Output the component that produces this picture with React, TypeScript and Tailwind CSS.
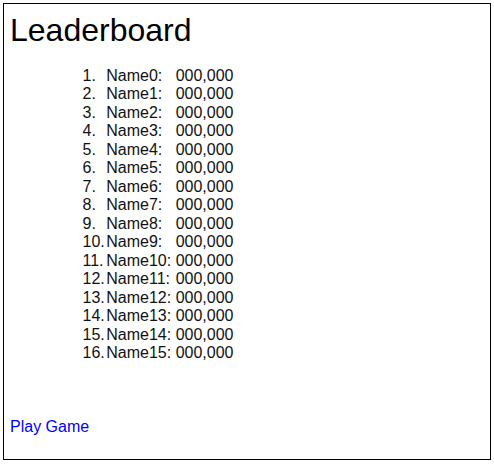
import React from "react";

const rows = Array.from({ length: 16 }, (_, i) => ({
  rank: `${i + 1}.`,
  name: `Name${i}:`,
  score: "000,000",
}));

export default function App() {
  return (
    <div className="p-[3px] bg-white" style={{ fontFamily: '"Liberation Sans", Arial, sans-serif' }}>
      <div className="border border-black w-[488px] h-[457px] flex flex-col bg-white">
        <h1 className="text-[32px] leading-[normal] text-black pl-[6px] pt-[8px]">Leaderboard</h1>
        <div className="mt-[18px] pl-[78.5px]">
          <div className="grid grid-cols-[auto_auto_auto] w-fit text-[16px] leading-[18.47px] text-[#111]">
            {rows.map((r) => (
              <React.Fragment key={r.rank}>
                <span className="pr-[1.5px]">{r.rank}</span>
                <span className="pr-[4.5px]">{r.name}</span>
                <span>{r.score}</span>
              </React.Fragment>
            ))}
          </div>
        </div>
        <a className="mt-[55px] pl-[6px] text-[16px] leading-[normal] text-[#0000ff] w-fit cursor-pointer">Play Game</a>
      </div>
    </div>
  );
}
